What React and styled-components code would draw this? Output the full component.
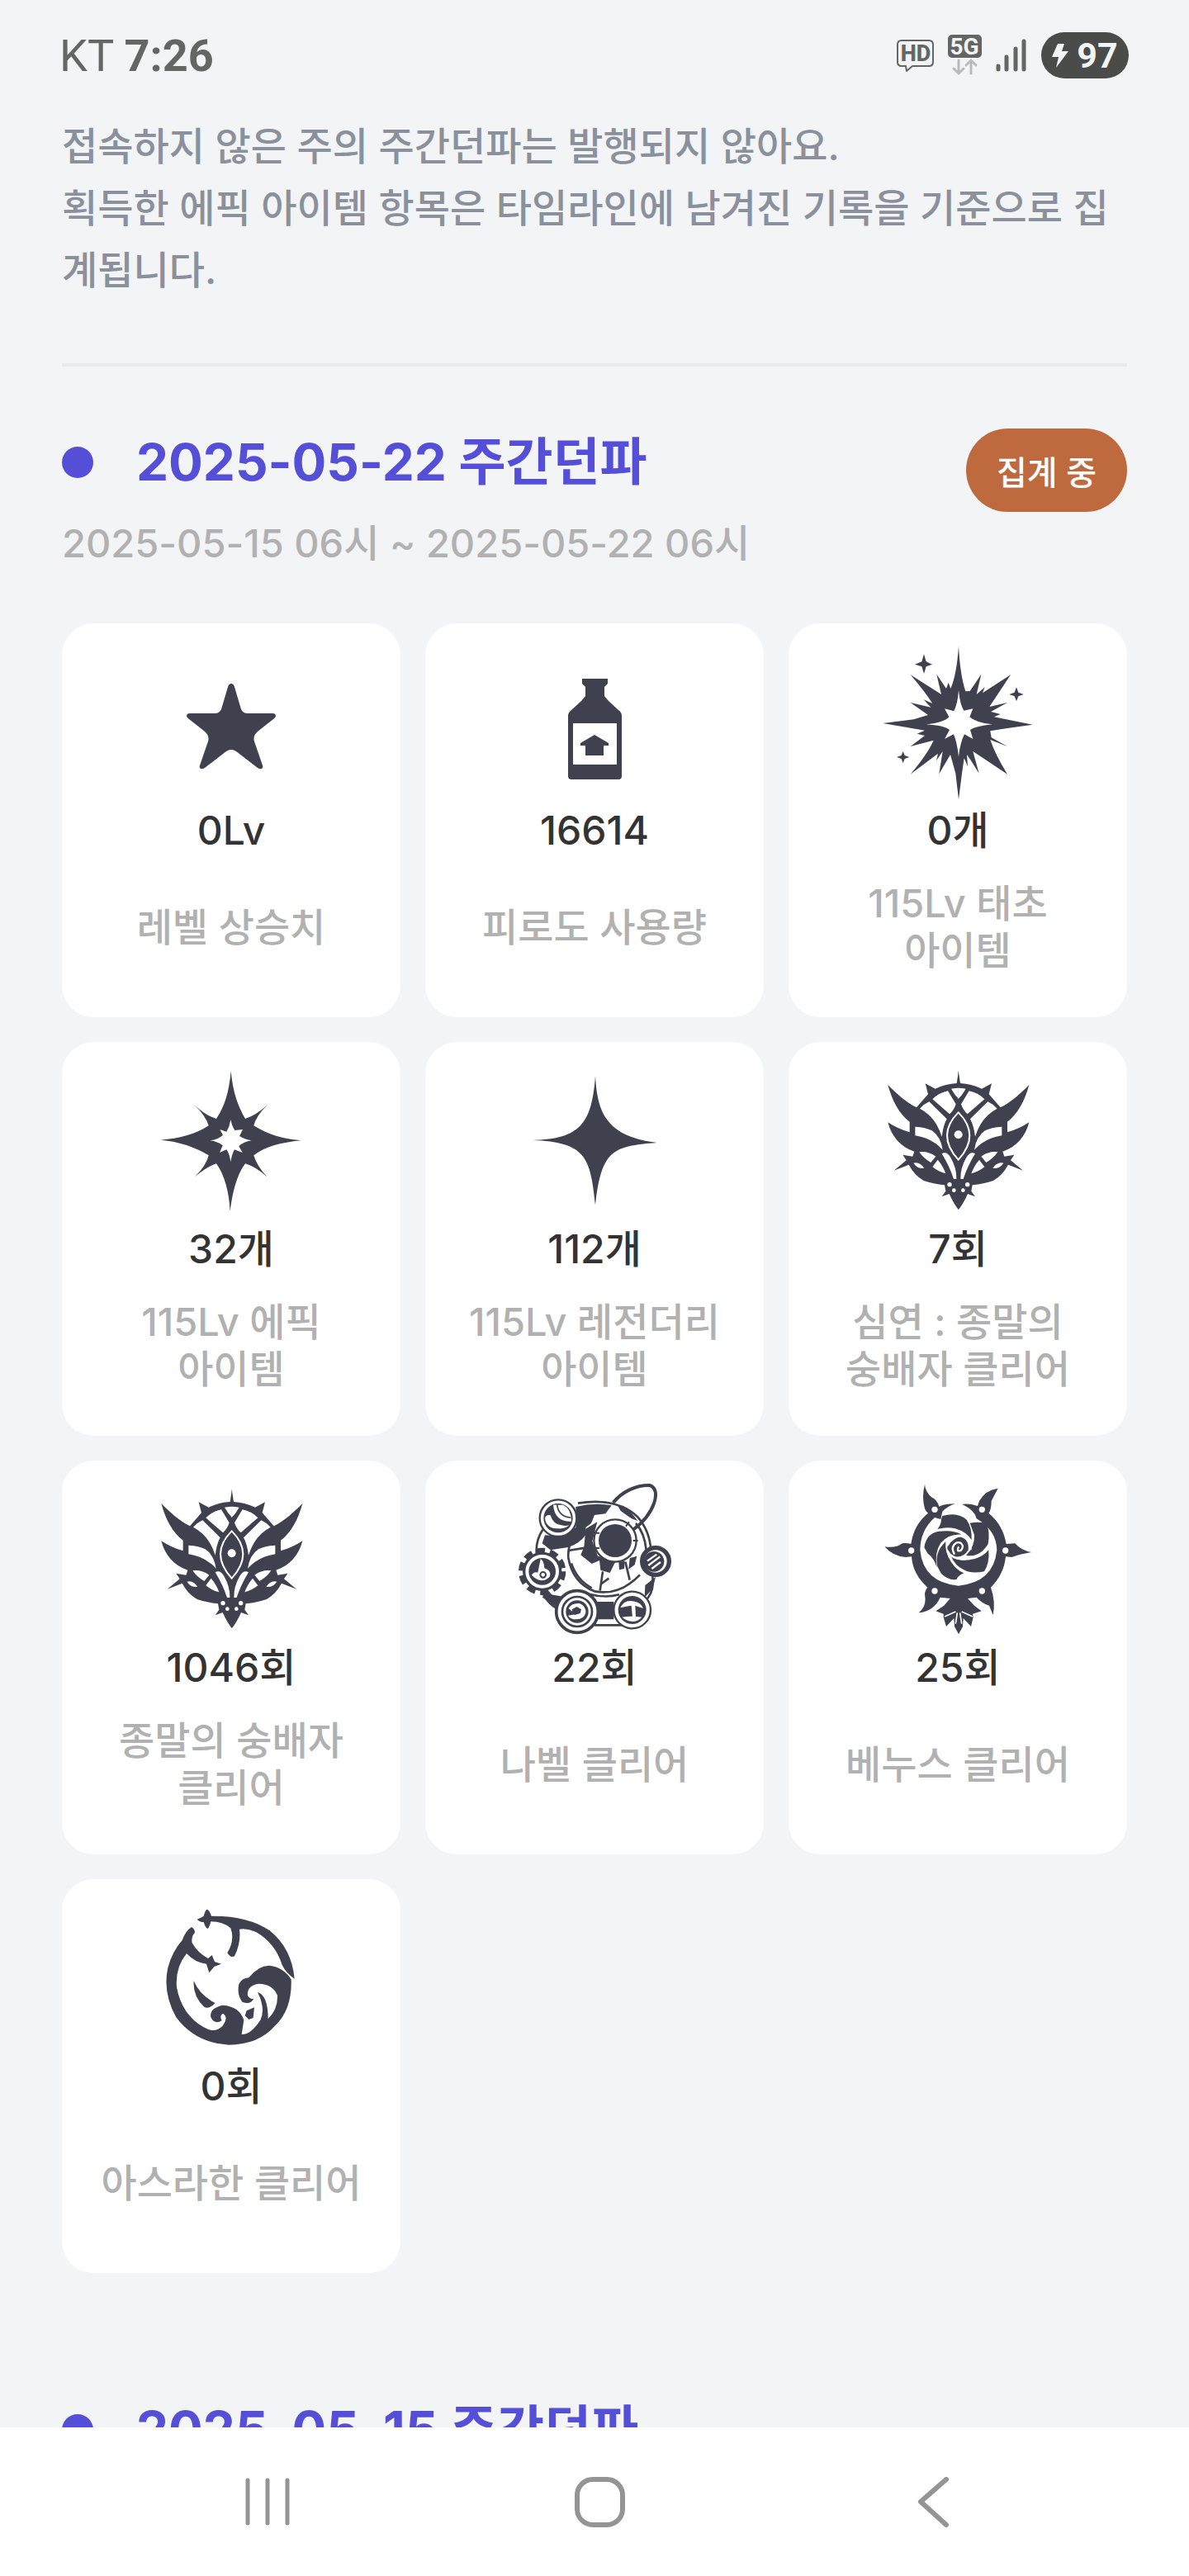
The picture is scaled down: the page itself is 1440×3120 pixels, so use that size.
import React from 'react';
import styled, { createGlobalStyle, ThemeProvider } from 'styled-components';

const theme = {
  colors: {
    page: '#f2f4f6',
    card: '#ffffff',
    line: '#e9eaec',
    primary: '#554fd8',
    badge: '#bf6a3e',
    notice: '#8b909d',
    muted: '#b1b1b1',
    text: '#333333',
    icon: '#40414f',
    status: '#646664',
    statusDark: '#4a4c4a',
    nav: '#949494',
  },
};

const GlobalStyle = createGlobalStyle`
  * {
    box-sizing: border-box;
  }

  body {
    margin: 0;
    background-color: ${props => props.theme.colors.page};
    font-family: Inter, 'Noto Sans CJK KR', sans-serif;
    font-weight: 500;
  }
`;

const Screen = styled.div`
  display: flex;
  flex-direction: column;
  height: 100vh;
`;

const StatusBar = styled.header`
  display: flex;
  flex-shrink: 0;
  justify-content: space-between;
  align-items: center;
  height: 134px;
  padding: 0 73px 0 72px;
  color: ${props => props.theme.colors.status};
  font-family: Roboto, sans-serif;
  font-size: 54px;
  font-weight: 400;

  strong {
    font-weight: 700;
  }
`;

const StatusIcons = styled.div`
  display: flex;
  align-items: center;
  gap: 16px;

  svg {
    display: block;
  }
`;

const Battery = styled.span`
  display: flex;
  align-items: center;
  justify-content: center;
  gap: 10px;
  width: 106px;
  height: 56px;
  border-radius: 28px;
  background-color: ${props => props.theme.colors.statusDark};
  color: #f2f4f6;
  font-size: 43px;
  font-weight: 700;
`;

const Content = styled.main`
  flex: 1;
  min-height: 0;
  overflow: hidden;
  padding: 5px 75px 0;
`;

const Notice = styled.p`
  margin: 0;
  padding-bottom: 76px;
  border-bottom: 4px solid ${props => props.theme.colors.line};
  color: ${props => props.theme.colors.notice};
  font-size: 47px;
  line-height: 75px;
`;

const Week = styled.section`
  padding-top: 75px;
  margin-bottom: 74px;
`;

const WeekHeader = styled.div`
  display: flex;
  justify-content: space-between;
  align-items: flex-start;
  margin-bottom: 60px;
`;

const WeekTitle = styled.h2`
  display: flex;
  align-items: center;
  gap: 52px;
  margin: 0 0 19px;
  color: ${props => props.theme.colors.primary};
  font-size: 62px;
  font-weight: 700;
  line-height: 82px;

  &::before {
    content: '';
    width: 38px;
    height: 38px;
    border-radius: 50%;
    background-color: ${props => props.theme.colors.primary};
  }
`;

const Period = styled.p`
  margin: 0;
  color: ${props => props.theme.colors.muted};
  font-size: 47px;
  line-height: 75px;
`;

const Badge = styled.span`
  display: flex;
  align-items: center;
  height: 101px;
  padding: 0 37px;
  border-radius: 51px;
  background-color: ${props => props.theme.colors.badge};
  color: #ffffff;
  font-size: 40px;
`;

const Grid = styled.ul`
  display: grid;
  grid-template-columns: repeat(3, 1fr);
  gap: 30px;
  margin: 0;
  padding: 0;
  list-style: none;
`;

const Card = styled.li`
  display: flex;
  flex-direction: column;
  align-items: center;
  padding: 26px 36px 53px;
  border-radius: 38px;
  background-color: ${props => props.theme.colors.card};
  text-align: center;
  word-break: keep-all;
`;

const CardIcon = styled.svg`
  width: 190px;
  height: 190px;
  color: ${props => props.theme.colors.icon};
`;

const Value = styled.strong`
  margin-bottom: 24px;
  color: ${props => props.theme.colors.text};
  font-size: 48px;
  font-weight: 500;
  line-height: 70px;
`;

const Label = styled.span`
  display: flex;
  align-items: center;
  height: 114px;
  color: ${props => props.theme.colors.muted};
  font-size: 47px;
  line-height: 57px;
`;

const NavBar = styled.nav`
  display: grid;
  flex-shrink: 0;
  grid-template-columns: repeat(3, 1fr);
  height: 180px;
  padding: 0 109px 0 123px;
  background-color: ${props => props.theme.colors.card};
`;

const NavButton = styled.button`
  display: flex;
  align-items: center;
  justify-content: center;
  padding: 0;
  border: 0;
  background: none;
  color: ${props => props.theme.colors.nav};
`;

function StarIcon() {
  return (
    <CardIcon viewBox="0 0 190 190" aria-hidden="true">
      <path
        fill="currentColor"
        d="M95 47q3 0 4 4l8 27q2 5 8 5h30q4 0 4 3 0 2-3 4l-19 15q-6 5-4 12l10 29q1 3-1 4-2 1-5-1l-26-20q-6-4-12 0l-26 20q-3 2-5 1-2-1-1-4l10-29q2-7-4-12L44 90q-3-2-3-4 0-3 4-3h30q6 0 8-5l8-27q1-4 4-4z"
      />
    </CardIcon>
  );
}

function BottleIcon() {
  return (
    <CardIcon viewBox="0 0 190 190" aria-hidden="true">
      <path
        fill="currentColor"
        d="M80 41h31v6l-4 4v11l5 6 12 11q4 3 4 7v73q0 4-4 4H67q-4 0-4-4V86q0-4 4-7l12-11 5-6V51l-4-4z"
      />
      <path fill="#fff" d="M69 95h53v50H69z" />
      <path fill="currentColor" d="M95 109l17 10v3h-6v12H84v-12h-6v-3z" />
    </CardIcon>
  );
}

function PrimevalIcon() {
  return (
    <CardIcon viewBox="75 63 570 570" aria-hidden="true">
      <path
        fill="currentColor"
        d="M363 68Q368 170 388 232L404 231 445 170 428 243 458 217 450 238 552 172 475 288 540 273 480 306 515 315 492 325 632 353 540 366 478 376 482 400 540 432 478 408Q495 460 540 533L415 450 437 530 408 484 393 462 396 505 383 475 375 530 363 625 352 530 333 462 292 532 305 450 282 484 288 458 188 533Q250 460 272 410L188 432 240 393 212 386 240 374 88 348 200 334 252 318 188 273 262 290 236 262 268 276Q238 230 188 172L300 243 283 170 318 222 326 200 334 222Q356 170 363 68z"
      />
      <path
        fill="#fff"
        d="M363 228Q368 280 382 302L415 295 403 325Q425 346 485 352 425 358 405 372L415 405 384 388Q368 420 363 470 358 420 345 388L312 405 330 372Q310 356 245 352 310 346 328 325L312 295 346 304Q360 275 363 228z"
      />
      <path
        fill="currentColor"
        d="M237 97l8 27 22 10-22 8-8 26-8-26-25-8 25-10zM573 217l7 19 19 7-19 7-7 18-7-18-19-7 19-7zM161 450l6 15 17 6-17 6-6 16-6-16-17-6 17-6z"
      />
    </CardIcon>
  );
}

function EpicIcon() {
  return (
    <CardIcon viewBox="45 24 570 570" aria-hidden="true">
      <path
        fill="currentColor"
        d="M329 52C336 130 355 180 381 225Q420 212 460 176 420 215 412 250C460 280 510 298 584 304 510 311 450 328 412 358Q422 395 460 436 420 400 381 388C350 430 335 490 326 560 322 490 306 430 276 388Q240 400 198 436 240 395 248 358C200 328 140 308 74 302 140 297 200 282 248 250Q238 215 198 176 240 215 276 225C306 180 322 130 329 52z"
      />
      <path
        fill="#fff"
        d="M328 228Q333 252 343 267L372 264 360 288Q378 300 404 304 375 308 358 325L371 348 342 337Q333 352 328 382 324 352 313 337L288 348 299 322Q280 308 254 304 284 300 300 284L289 264 313 272Q325 252 328 228z"
      />
    </CardIcon>
  );
}

function LegendaryIcon() {
  return (
    <CardIcon viewBox="15 24 570 570" aria-hidden="true">
      <path
        fill="currentColor"
        d="M303 70C310 205 345 290 527 312 370 325 325 335 303 538 285 360 265 310 74 303 250 300 290 240 303 70z"
      />
    </CardIcon>
  );
}

// left half of the mask, mirrored for the right side
const cultHalf = (
  <g>
    <path
      fill="currentColor"
      d="M333 50L326 96Q286 98 248 116L212 97 222 136 180 184C140 164 108 134 76 102 92 162 118 208 155 236V274Q112 262 76 238C88 288 122 328 172 344L166 362 130 356 143 376 98 413 152 392Q172 430 206 450 240 462 282 466L286 488 272 508 299 498Q316 536 333 556z"
    />
    <path
      fill="#fff"
      d="M192 188Q206 172 226 163L290 226Q277 250 272 290 256 240 226 212 208 196 192 188zM238 154Q262 130 294 124L323 172Q316 194 300 208zM306 116Q320 113 334 113V154Q318 138 306 116zM175 254Q214 256 236 268 268 290 275 338 250 310 215 296 196 290 175 286zM190 346Q222 342 250 362L232 384Q206 370 190 346zM272 352Q290 342 304 366 326 404 325 444H315Q300 398 272 352zM257 374Q276 396 286 424 260 418 238 400zM169 386Q192 380 208 405 184 408 169 386z"
    />
    <circle cx="300" cy="464" r="8" fill="#fff" />
    <circle cx="316" cy="485" r="7" fill="#fff" />
  </g>
);

function CultIcon() {
  return (
    <CardIcon viewBox="45 24 570 570" aria-hidden="true">
      {cultHalf}
      <g transform="matrix(-1 0 0 1 665 0)">{cultHalf}</g>
      <path fill="none" stroke="#fff" strokeWidth="6" d="M332 202Q414 284 332 374 250 284 332 202z" />
      <circle cx="332" cy="283" r="15" fill="#fff" />
    </CardIcon>
  );
}

function NabelIcon() {
  return (
    <CardIcon viewBox="15 15 570 570" aria-hidden="true">
      <g fill="none" stroke="currentColor" strokeWidth="8">
        <path d="M240 92Q380 70 455 140 500 190 505 262M112 188Q84 230 90 280M110 415Q130 456 166 476M126 408Q150 440 176 450M510 350Q520 420 480 450M300 535h100" />
        <path d="M450 165Q482 200 488 262" />
        <path d="M260 190Q200 220 205 290 220 380 300 412 390 430 465 352" />
        <path d="M216 310Q235 370 290 400M205 264l62-10M330 340l-10 70M412 305l16 66M352 365l-30 22M280 422q60 16 110 2" />
        <path strokeWidth="12" d="M368 90C400 50 450 26 500 27 545 40 520 130 438 190" />
      </g>
      <g fill="currentColor">
        <path d="M232 105Q300 88 362 100L340 130 300 135 288 165 268 180 270 205Q245 240 205 252L140 262 110 238 120 208 180 212 232 180z" />
        <path d="M268 185L310 160 292 230 312 284 380 302 372 312 356 345 322 335 318 300 290 312 250 280 262 250z" />
        <path d="M385 102l36 8 36 46-22-8-40-28zM388 306l22-4-2 28-18 4zM428 292l26-8-8 32-22 16zM484 390l38-30-10 42-30 32zM305 450h65v64h-65zM118 420l60 10-15 40-52-36z" />
      </g>
      <g fill="#fff" stroke="currentColor" strokeWidth="7">
        <circle cx="375" cy="228" r="77" />
        <circle cx="168" cy="146" r="67" />
        <circle cx="237" cy="486" r="76" strokeWidth="11" />
        <circle cx="437" cy="480" r="67" />
      </g>
      <path
        fill="none"
        stroke="currentColor"
        strokeWidth="6"
        d="M318 200h-22M318 255h-20M426 160l-12 16M458 228h-18"
      />
      <circle cx="375" cy="228" r="60" fill="currentColor" />
      <circle cx="168" cy="146" r="53" fill="currentColor" />
      <path fill="#fff" d="M150 98Q155 160 216 158 216 112 186 98zM120 146q4-14 20-10 10 34 40 36 16 4 28 0-14 14-40 12-44 0-48-38z" />
      <path fill="none" stroke="currentColor" strokeWidth="5" d="M164 98q6 44 50 46" />
      <circle cx="110" cy="340" r="76" fill="none" stroke="currentColor" strokeWidth="20" strokeDasharray="30 18" />
      <circle cx="110" cy="340" r="66" fill="#fff" stroke="currentColor" strokeWidth="10" />
      <circle cx="110" cy="340" r="49" fill="currentColor" />
      <path fill="#fff" d="M104 294q12 6 14 34 26 8 20 30-28 32-66-4 6-14 22-10z" />
      <circle cx="113" cy="352" r="10" fill="none" stroke="currentColor" strokeWidth="6" />
      <circle cx="522" cy="303" r="49" fill="#fff" stroke="currentColor" strokeWidth="16" />
      <circle cx="516" cy="304" r="37" fill="currentColor" />
      <path stroke="#fff" strokeWidth="7" d="M492 302l34-24M496 318l42-32M508 330l32-24" />
      <circle cx="237" cy="486" r="54" fill="none" stroke="currentColor" strokeWidth="8" />
      <circle cx="237" cy="486" r="41" fill="currentColor" />
      <path fill="#fff" d="M206 474q10-20 40-18 24 10 22 34-6 24-34 24-22 0-30-14l26-4q-12-12-24-22z" />
      <path fill="currentColor" d="M218 478l18-10 16 10-4 14-20 6-8-8z" />
      <circle cx="437" cy="480" r="51" fill="currentColor" />
      <path fill="#fff" d="M394 472q14-30 44-24 32 4 38 26l-28-10 2 42-12 2-4-44q-22 4-40 8zM400 506q36-6 72 0-30 32-72 0z" />
    </CardIcon>
  );
}

function VenusIcon() {
  return (
    <CardIcon viewBox="15 15 570 570" aria-hidden="true">
      <g fill="currentColor">
        <path d="M290 94Q255 94 232 104 224 78 204 70 182 50 180 24 168 70 180 112 184 122 192 128 140 170 130 240 114 236 98 238 76 256 34 250 62 284 110 288L132 286Q136 350 190 398 176 412 182 440 182 470 158 490 214 484 236 434L272 438 250 464 220 484 248 494 248 506 258 540 286 510 288 540 303 568 318 540 320 510 348 540 356 506 354 494 386 484 360 464 336 438 368 434Q388 456 414 464L428 498Q438 450 420 398 468 350 474 286L496 288Q530 276 567 270 530 264 508 238L476 240Q464 170 412 128 422 116 422 84L446 38Q400 44 378 84L372 102Q340 92 315 96 345 108 362 132L368 148Q440 190 442 262 430 380 302 392 174 380 163 262 164 190 216 144L238 150 244 122Q262 104 290 94z" />
        <path d="M244 138Q300 122 332 152 352 180 350 226 332 196 290 184 262 176 226 186 240 170 240 150z" />
        <path d="M344 164Q370 158 404 164 418 196 410 240 380 290 330 282 362 250 360 208z" />
        <path d="M178 252Q186 200 232 194 286 188 314 206 268 202 238 236 214 272 224 326 214 292 190 274z" />
        <path d="M226 322Q214 270 256 232 252 270 276 306 296 336 322 346 302 354 296 368 270 376 240 348z" />
        <path d="M276 286Q310 308 362 294 394 284 412 262 416 310 396 340 350 350 322 334 290 320 276 286z" />
        <path d="M262 256Q262 220 302 214 342 218 338 262 322 290 290 286 266 276 262 256z" />
      </g>
      <path
        fill="none"
        stroke="#fff"
        strokeWidth="7"
        d="M304 250Q298 256 300 264 316 268 318 248 312 230 294 236 272 250 288 278M262 246Q278 214 318 208 352 230 346 262M262 264Q280 300 330 294"
      />
      <path stroke="#fff" strokeWidth="5" d="M292 486l-40 18M298 490l-6 40M314 486l40 18M308 490l6 40" />
      <g fill="#fff">
        <circle cx="216" cy="115" r="11" />
        <circle cx="388" cy="115" r="11" />
        <circle cx="131" cy="264" r="11" />
        <circle cx="473" cy="264" r="11" />
        <circle cx="216" cy="411" r="11" />
        <circle cx="388" cy="411" r="11" />
      </g>
    </CardIcon>
  );
}

function AsrahanIcon() {
  return (
    <CardIcon viewBox="-15 6 570 570" aria-hidden="true">
      <g fill="currentColor">
        <path d="M182 38Q190 38 198 62 330 60 410 115 490 180 500 290 470 270 455 240 430 160 360 120 330 106 300 110 306 160 282 208 268 216 256 196 284 150 268 106 240 82 196 82 190 106 184 108 176 104 170 84 156 84 146 74 160 68 170 62 176 40 182 38z" />
        <path d="M126 102Q138 108 138 122 124 136 128 160 148 196 186 216L200 204 210 228 234 236 208 246 190 268 180 236Q140 232 108 198 66 250 72 320 90 420 170 466 210 490 238 462 262 430 240 416 226 424 236 442 210 458 196 430 190 396 240 386 300 390 316 440L308 492Q340 494 376 440 396 400 366 338 404 350 404 436 440 400 438 350 420 308 370 308 326 314 330 352 340 366 352 362 340 386 310 374 290 346 298 310 308 288 334 286 370 240 410 242 460 248 488 292 492 400 430 460 370 530 262 530 140 524 70 430 20 340 40 250 56 190 92 150 104 116 126 102z" />
        <path d="M134 298Q156 350 212 378 190 402 172 392 130 354 134 298zM326 406l28-12-4 38-16 6-14-14z" />
      </g>
    </CardIcon>
  );
}

const stats = [
  { icon: StarIcon, value: '0Lv', label: '레벨 상승치' },
  { icon: BottleIcon, value: '16614', label: '피로도 사용량' },
  { icon: PrimevalIcon, value: '0개', label: '115Lv 태초 아이템' },
  { icon: EpicIcon, value: '32개', label: '115Lv 에픽 아이템' },
  { icon: LegendaryIcon, value: '112개', label: '115Lv 레전더리 아이템' },
  { icon: CultIcon, value: '7회', label: '심연 : 종말의 숭배자 클리어' },
  { icon: CultIcon, value: '1046회', label: '종말의 숭배자 클리어' },
  { icon: NabelIcon, value: '22회', label: '나벨 클리어' },
  { icon: VenusIcon, value: '25회', label: '베누스 클리어' },
  { icon: AsrahanIcon, value: '0회', label: '아스라한 클리어' },
];

function PhoneStatus() {
  return (
    <StatusBar>
      <span>
        KT <strong>7:26</strong>
      </span>
      <StatusIcons>
        <svg width="47" height="42" viewBox="0 0 47 42" aria-label="HD">
          <path
            d="M7 3h33q5 0 5 5v21q0 5-5 5H20l-7 6-1-6H7q-5 0-5-5V8q0-5 5-5z"
            fill="none"
            stroke="currentColor"
            strokeWidth="2"
            strokeLinejoin="round"
          />
          <text x="24" y="28" textAnchor="middle" fontSize="27" fontWeight="800" fill="currentColor">
            HD
          </text>
        </svg>
        <svg width="41" height="52" viewBox="0 0 41 52" aria-label="5G">
          <rect y="1" width="41" height="28" rx="5" fill="currentColor" />
          <text x="20" y="25" textAnchor="middle" fontSize="28" fontWeight="700" fill="#f2f4f6">
            5G
          </text>
          <path
            d="M13 32v16M7 42l6 6 6-6M28 48V32M22 38l6-6 6 6"
            fill="none"
            stroke="#b9bbbb"
            strokeWidth="3"
            strokeLinecap="round"
          />
        </svg>
        <svg width="40" height="40" viewBox="0 0 40 40" aria-label="신호">
          <path
            d="M4 33v4M14 22v15M25 12v25M35 3v34"
            stroke="currentColor"
            strokeWidth="5"
            strokeLinecap="round"
          />
        </svg>
        <Battery>
          <svg width="20" height="29" viewBox="0 0 20 29" aria-hidden="true">
            <path d="M7 0h8l-3 9h8L5 29l3-13H0z" fill="currentColor" />
          </svg>
          97
        </Battery>
      </StatusIcons>
    </StatusBar>
  );
}

function WeekSection({ date, period, collecting, items }) {
  return (
    <Week>
      <WeekHeader>
        <div>
          <WeekTitle>{date} 주간던파</WeekTitle>
          <Period>{period}</Period>
        </div>
        {collecting && <Badge>집계 중</Badge>}
      </WeekHeader>
      <Grid>
        {items.map(({ icon: Icon, value, label }) => (
          <Card key={label}>
            <Icon />
            <Value>{value}</Value>
            <Label>{label}</Label>
          </Card>
        ))}
      </Grid>
    </Week>
  );
}

export default function App() {
  return (
    <ThemeProvider theme={theme}>
      <GlobalStyle />
      <Screen>
        <PhoneStatus />
        <Content>
          <Notice>
            접속하지 않은 주의 주간던파는 발행되지 않아요.
            <br />
            획득한 에픽 아이템 항목은 타임라인에 남겨진 기록을 기준으로 집계됩니다.
          </Notice>
          <WeekSection
            date="2025-05-22"
            period="2025-05-15 06시 ~ 2025-05-22 06시"
            collecting
            items={stats}
          />
          <WeekSection date="2025-05-15" items={[]} />
        </Content>
        <NavBar>
          <NavButton type="button" aria-label="최근 앱">
            <svg width="54" height="58" viewBox="0 0 54 58">
              <path d="M3 3v52M27 3v52M51 3v52" stroke="currentColor" strokeWidth="5" strokeLinecap="round" />
            </svg>
          </NavButton>
          <NavButton type="button" aria-label="홈">
            <svg width="61" height="61" viewBox="0 0 61 61">
              <rect x="3" y="3" width="55" height="55" rx="19" fill="none" stroke="currentColor" strokeWidth="6" />
            </svg>
          </NavButton>
          <NavButton type="button" aria-label="뒤로">
            <svg width="38" height="61" viewBox="0 0 38 61">
              <path
                d="M35 3L4 30l31 28"
                fill="none"
                stroke="currentColor"
                strokeWidth="6"
                strokeLinecap="round"
                strokeLinejoin="round"
              />
            </svg>
          </NavButton>
        </NavBar>
      </Screen>
    </ThemeProvider>
  );
}
